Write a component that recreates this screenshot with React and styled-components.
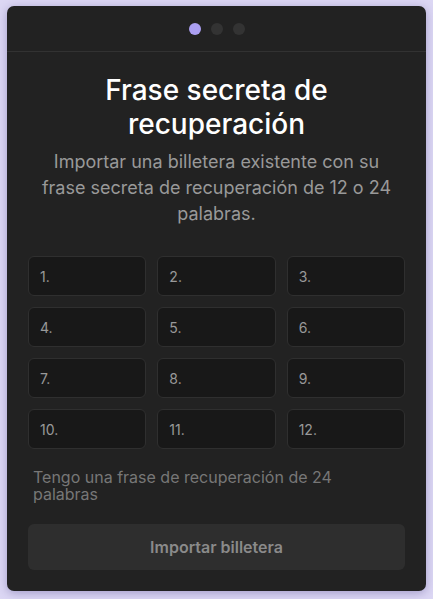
import React from 'react';
import styled, { createGlobalStyle } from 'styled-components';

const GlobalStyle = createGlobalStyle`
  html, body {
    margin: 0;
    padding: 0;
    background: #dcd7f4;
    font-family: Inter, "Noto Sans", sans-serif;
  }
  * { box-sizing: border-box; }
`;

const words = Array.from({ length: 12 }, (_, i) => i + 1);

function App() {
  return (
    <Page>
      <GlobalStyle />
      <Card>
        <Header>
          <Dot active />
          <Dot />
          <Dot />
        </Header>
        <Body>
          <Title>Frase secreta de recuperación</Title>
          <Subtitle>
            Importar una billetera existente con su frase secreta de recuperación de 12 o 24 palabras.
          </Subtitle>
          <Grid>
            {words.map((n) => (
              <Cell key={n}>
                <CellLabel>{n}.</CellLabel>
              </Cell>
            ))}
          </Grid>
          <Toggle>Tengo una frase de recuperación de 24 palabras</Toggle>
          <Submit disabled>Importar billetera</Submit>
        </Body>
      </Card>
    </Page>
  );
}

const Page = styled.div`
  width: 433px;
  height: 599px;
  padding: 6px 7px 8px;
`;

const Card = styled.div`
  width: 419px;
  height: 585px;
  background: #222222;
  border-radius: 7px;
  box-shadow: 0 2px 10px rgba(60, 50, 120, 0.35);
  display: flex;
  flex-direction: column;
`;

const Header = styled.div`
  height: 46px;
  display: flex;
  align-items: center;
  justify-content: center;
  gap: 10px;
  border-bottom: 1px solid #323232;
`;

const Dot = styled.span`
  width: 12px;
  height: 12px;
  border-radius: 50%;
  background: ${(p) => (p.active ? '#ab9ff2' : '#333333')};
`;

const Body = styled.div`
  padding: 21px 21px 21px;
  display: flex;
  flex-direction: column;
  flex: 1;
`;

const Title = styled.h1`
  margin: 0 auto;
  max-width: 300px;
  font-size: 28px;
  line-height: 34px;
  font-weight: 500;
  color: #ffffff;
  text-align: center;
`;

const Subtitle = styled.p`
  margin: 8px 6px 0;
  font-size: 18px;
  line-height: 26px;
  color: #999999;
  text-align: center;
`;

const Grid = styled.div`
  margin-top: 29px;
  display: grid;
  grid-template-columns: repeat(3, 1fr);
  gap: 11px;
`;

const Cell = styled.div`
  height: 40px;
  background: #181818;
  border: 1px solid #2f2f2f;
  border-radius: 6px;
  display: flex;
  align-items: center;
  padding-left: 11px;
`;

const CellLabel = styled.span`
  font-size: 14px;
  color: #999999;
`;

const Toggle = styled.button`
  margin: 20px 0 0;
  padding: 0 5px;
  background: none;
  border: none;
  text-align: left;
  font-family: inherit;
  font-size: 16px;
  line-height: 17px;
  color: #777777;
  max-width: 340px;
  cursor: pointer;
`;

const Submit = styled.button`
  margin-top: auto;
  height: 46px;
  width: 100%;
  border: none;
  border-radius: 6px;
  background: #2e2e2e;
  color: #8a8a8a;
  font-family: inherit;
  font-size: 16px;
  font-weight: 600;
`;

export default App;
